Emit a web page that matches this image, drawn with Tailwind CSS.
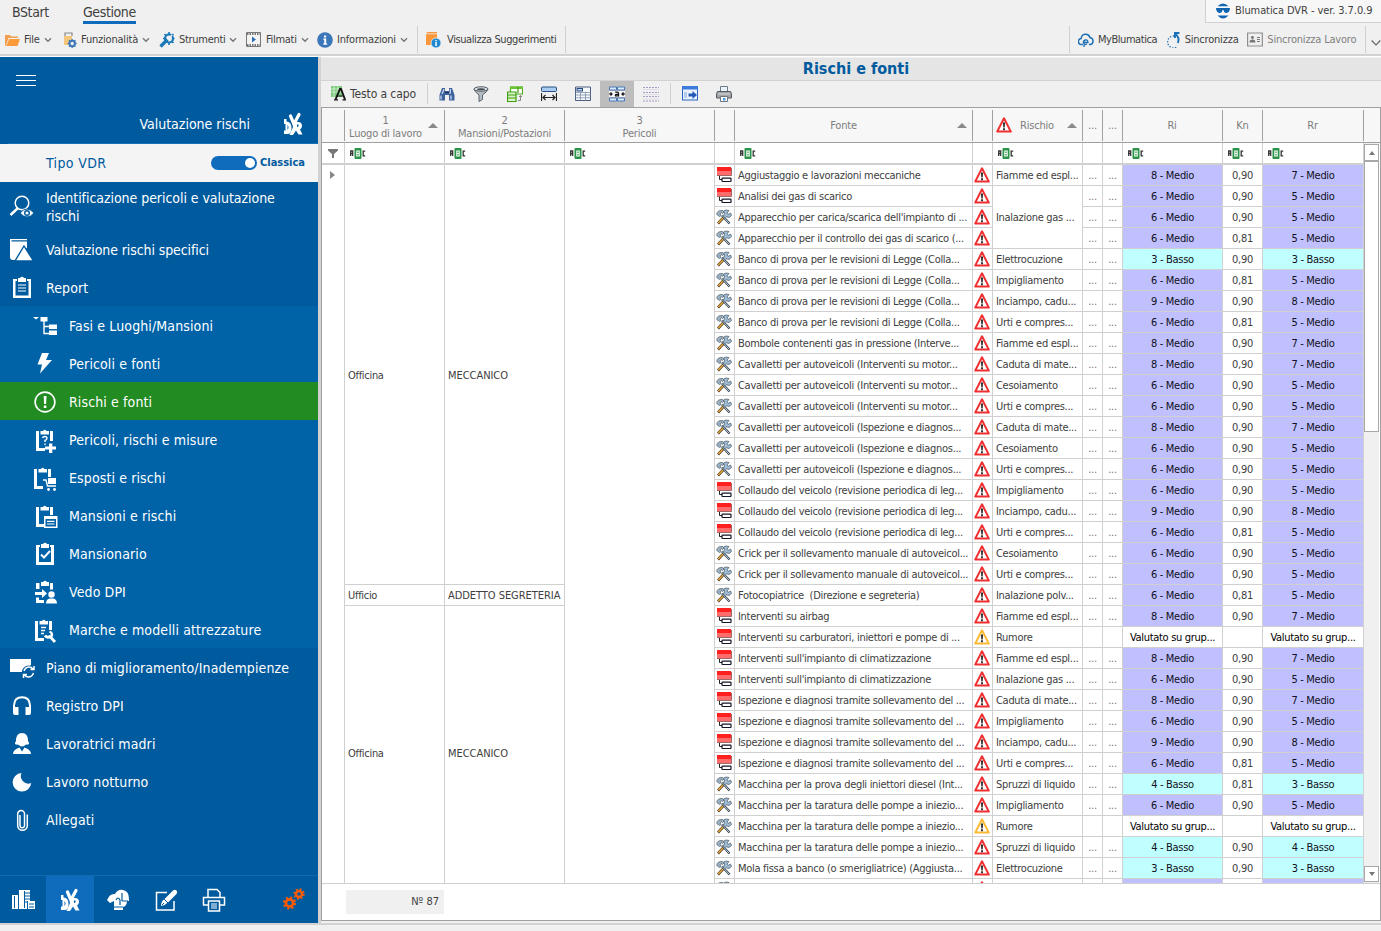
<!DOCTYPE html>
<html lang="it">
<head>
    <meta charset="UTF-8">
    <meta name="viewport" content="width=device-width, initial-scale=1.0">
    <title>Blumatica DVR</title>
    <script src="https://cdn.jsdelivr.net/npm/@tailwindcss/browser@4"></script>
</head>
<body class="w-[1381px] h-[931px] overflow-hidden bg-[#f0f0f0] font-['DejaVu_Sans_Condensed','DejaVu_Sans',sans-serif] text-[11px] text-[#404040]">

    <!-- Simboli riutilizzati nella griglia -->
    <svg class="hidden">
        <symbol id="i-risk" viewBox="0 0 16 16">
            <path d="M8 1.300 14.800 14.600H1.200z" fill="#fff" stroke="currentColor" stroke-width="2" stroke-linejoin="round"/>
            <path d="M7 5.500h2l-.3 5H7.300zM7.100 11.200h1.800v2H7.100z" fill="#222"/>
        </symbol>
        <symbol id="i-phase" viewBox="0 0 16 16">
            <rect x="1" y="0" width="14" height="4.500" fill="#ff2020"/>
            <rect x="1" y="4" width="14" height="4" fill="#ff6c6c"/>
            <path d="M15.500 1v7.500H1" fill="none" stroke="#8a4040" stroke-width=".8"/>
            <path d="M3.500 9v3.500H6" fill="none" stroke="#222"/>
            <rect x="6" y="11.200" width="9" height="3.300" rx=".5" fill="#fff" stroke="#15152a" stroke-width="1.200"/>
        </symbol>
        <symbol id="i-tools" viewBox="0 0 16 16">
            <path d="m2 14.500 6-6.500" stroke="#4a3a20" stroke-width="2.600"/>
            <path d="M2.300 14 7.500 8.500" stroke="#e8a83c" stroke-width="1.500"/>
            <path d="m6 6.500 7.500 8" stroke="#3a4650" stroke-width="2.300"/>
            <path d="M6 6.500 13 14" stroke="#b4c6d4" stroke-width="1"/>
            <path d="M.8 5.500C.8 2.500 3 1.300 6.500 1.500L8 3 6.500 4.500 5 3.500 4 5l1 1.500-1.500 1z" fill="#9db4c7" stroke="#56646f" stroke-width=".8"/>
            <path d="m7.500 7.500 1-3.500L7.500 2 10 1l3 .5L11 4l1 1.500 2.500-1.500 1 2.500L13 8.500l-3-.8-1 1z" fill="#9fbcd6" stroke="#56646f" stroke-width=".8"/>
        </symbol>
        <symbol id="i-chev" viewBox="0 0 8 6">
            <path d="m1 1.300 3 3 3-3" fill="none" stroke="#777" stroke-width="1.400"/>
        </symbol>
        <symbol id="i-clip" viewBox="0 0 24 24">
            <path d="M3 3h3v17h6v3H3z" fill="#fff"/>
            <path d="M7.500 3H10q1.500-2.500 3.500 0H16v3.500H7.500z" fill="#fff"/>
        </symbol>
        <symbol id="i-dvr" viewBox="0 0 20 24">
            <path d="M10.500 11 7.500 4M11.500 11l4.500-8.500" stroke="#fff" stroke-width="3.200" stroke-linecap="round"/>
            <path d="M1 7h2.500v2.500q5 0 5 6.500T4 22H1v-3.500h1.500V12H1z" fill="#fff"/>
            <path d="M9 10h6q4 0 4 4 0 2.500-2 3.500l2.500 5h-4l-2.500-4L10 23H6.500l3.500-8z" fill="#fff"/>
            <path d="M4.500 13v5q2-2.500 0-5zM14 12.500v2.500q2 0 1.500-2.500z" fill="#005a9e"/>
        </symbol>
        <symbol id="i-print" viewBox="0 0 24 24">
            <path d="M6 10V1.500h9l3 3V10M6 17H1.500V9.500h21V17H18M6.500 13h11v10h-11z" fill="none" stroke="#fff" stroke-width="1.500"/>
            <path d="M9 16h6M9 18h6M9 20h6" stroke="#fff" stroke-width="1"/>
        </symbol>
    </svg>

    <!-- Barra superiore -->
    <header class="h-[57px] flex justify-between border-b border-white shadow-[inset_0_-2px_0_#d2d2d2]">
        <div class="flex flex-col">
            <nav class="flex gap-[33px] pl-3 pt-[2px] h-[26px] text-[14px] leading-[20px] tracking-[-0.4px]">
                <span class="w-[38px]">BStart</span>
                <span class="h-[22px] border-b-[3px] border-[#0f6cbd]">Gestione</span>
            </nav>
            <div class="flex items-center h-[27px] pl-[5px] tracking-[-0.2px] [&_span]:pt-px">
                <div class="flex items-center w-[58px]">
                    <svg class="w-[15px] h-3 mr-1" viewBox="0 0 15 12"><path d="M0 12V1h5l1.500 1.500H13V4H3.500L1 12z" fill="#f0a050"/><path d="M4 5h11l-2.500 7H1.500z" fill="#fb9a3a"/></svg>
                    <span>File</span><svg class="w-2 h-1.5 ml-1"><use href="#i-chev"/></svg>
                </div>
                <div class="flex items-center w-[96px]">
                    <svg class="w-[14px] h-4 mr-1" viewBox="0 0 14 16"><path d="M2 4V1h7v3" fill="none" stroke="#888" stroke-width="1.200"/><path d="M1 4h8v4H6v5H1z" fill="#f3c67c"/><circle cx="9.200" cy="11.500" r="2.700" fill="none" stroke="#3f79b8" stroke-width="2"/><path d="M9.200 7v2M9.200 14v2M4.700 11.500h2M11.700 11.500h2M6 8.300l1.400 1.400M11 13.300l1.400 1.400M12.400 8.300 11 9.700M7.400 13.300 6 14.700" stroke="#3f79b8" stroke-width="1.300"/></svg>
                    <span>Funzionalità</span><svg class="w-2 h-1.5 ml-1"><use href="#i-chev"/></svg>
                </div>
                <div class="flex items-center w-[87px]">
                    <svg class="w-4 h-4 mr-1" viewBox="0 0 16 16"><path d="m1.500 14.500 7-7" stroke="#1a78b8" stroke-width="3.200"/><circle cx="10" cy="6.500" r="4" fill="none" stroke="#1a78b8" stroke-width="2.200"/><path d="M10 0v2M10 11v2M15.500 6.500h-2M4 6.500h2M5.500 2.200 7 3.500M14.500 2.200 13 3.500M14.500 11 13 9.500" stroke="#1a78b8" stroke-width="1.600"/><path d="m9 8 4-5" stroke="#f0f0f0" stroke-width="1.500"/></svg>
                    <span class="tracking-[-0.3px]">Strumenti</span><svg class="w-2 h-1.5 ml-1"><use href="#i-chev"/></svg>
                </div>
                <div class="flex items-center w-[71px]">
                    <svg class="w-[15px] h-[15px] mr-[5px]" viewBox="0 0 15 15"><path d="M.5.500h14v14H.500z" fill="#f4f4f4" stroke="#777"/><path d="M1 2h13M1 13h13" stroke="#777" stroke-width="2" stroke-dasharray="1.500 1"/><path d="m6 4.500 4 3-4 3z" fill="#2a6fb8"/></svg>
                    <span class="tracking-[-0.3px]">Filmati</span><svg class="w-2 h-1.5 ml-1"><use href="#i-chev"/></svg>
                </div>
                <div class="flex items-center w-[100px]">
                    <svg class="w-4 h-4 mr-1" viewBox="0 0 16 16"><circle cx="8" cy="8" r="7.800" fill="#3b76b8"/><path d="M7 3.500h2.200v2H7zM6.300 6.500h2.900v5h1v1.200H6.200v-1.200h1V7.700h-.9z" fill="#fff"/></svg>
                    <span>Informazioni</span><svg class="w-2 h-1.5 ml-1"><use href="#i-chev"/></svg>
                </div>
                <div class="flex items-center w-[149px] h-[27px] border-x border-[#d0d0d0] pl-2 tracking-[-0.4px]">
                    <svg class="w-[15px] h-4 mr-[6px]" viewBox="0 0 15 16"><path d="M0 1.500 1.500 0H11v13H0z" fill="#fb963a"/><path d="M0 1.800h11" stroke="#f0f0f0" stroke-width=".8"/><circle cx="10" cy="11" r="5" fill="#1f88cf" stroke="#f0f0f0" stroke-width=".8"/><path d="M9.300 8h1.500v1.200H9.300zM9.300 10h1.500v4H9.300z" fill="#fff"/></svg>
                    <span>Visualizza Suggerimenti</span>
                </div>
            </div>
        </div>
        <div class="flex flex-col items-end">
            <div class="flex items-center w-[176px] h-[23px] border-l border-b border-[#cfcfcf] bg-[#f7f7f7] pl-2.5 whitespace-nowrap tracking-[-0.08px]">
                <svg class="w-[14px] h-4 mr-[5px]" viewBox="0 0 14 16"><path d="M1.500 3.300Q7-2.500 12.500 3.300zM1.500 12.500q5.500 6 11 0z" fill="#0f65b0"/><path d="M0 5h14q-.2 4.500-3.500 5-2.500.2-3-3h-1q-.5 3.200-3 3Q.2 9.500 0 5z" fill="#0f65b0"/></svg>
                <span class="pt-px">Blumatica DVR - ver. 3.7.0.9</span>
            </div>
            <div class="flex items-center w-[312px] h-[27px] mt-[3px] border-l border-[#d0d0d0] pl-2 whitespace-nowrap tracking-[-0.2px]">
                <svg class="w-4 h-4 mr-[4px]" viewBox="0 0 16 16"><path d="M5 12.500H3.500a3 3 0 0 1-.3-6A4.500 4.500 0 0 1 12 5.500a3.600 3.600 0 0 1 .5 7H11" fill="none" stroke="#1a6fb5" stroke-width="1.500"/><path d="M6 10.500h4q0-3-2.500-2.500t-2 3 3.500 1M6 13v2" fill="none" stroke="#1a6fb5" stroke-width="1.300"/></svg>
                <span class="w-[68px] pt-px tracking-[-0.45px]">MyBlumatica</span>
                <svg class="w-4 h-4 mr-[3px]" viewBox="0 0 16 16"><path d="M8 4a6 6 0 1 0 3 11" fill="none" stroke="#1a6fb5" stroke-width="1.300" stroke-dasharray="1.300 1.600"/><path d="M13.500 1H9v5M9.500 2q4.500 3.500 2.500 9" fill="none" stroke="#1a6fb5" stroke-width="1.900"/></svg>
                <span class="w-[63px] pt-px">Sincronizza</span>
                <svg class="w-4 h-[15px] mr-[4px]" viewBox="0 0 16 15"><path d="M.6 1h14.800v13H.600z" fill="none" stroke="#8f8f8f" stroke-width="1.200"/><circle cx="5.500" cy="5.500" r="1.500" fill="#777"/><path d="M2.500 10.500q0-3 3-3t3 3zM10 5h3v1h-3zM10 7h3v1h-3zM10 9h3v1h-3z" fill="#777"/></svg>
                <span class="w-[98px] pt-px text-[#808080]">Sincronizza Lavoro</span>
                <span class="border-l border-[#d0d0d0] h-[27px] pl-[5px] pt-[13px]"><svg class="w-2.5 h-2" viewBox="0 0 8 6"><path d="m.5 1 3.500 3.500L7.500 1" fill="none" stroke="#666" stroke-width="1"/></svg></span>
            </div>
        </div>
    </header>

    <div class="flex h-[866px]">
        <!-- Menu laterale -->
        <aside class="w-[318px] shrink-0 flex flex-col bg-[#005a9e] text-white text-[14px]">
            <div class="h-[87px] flex flex-col">
                <svg class="w-5 h-3 ml-4 mt-[18px]" viewBox="0 0 20 12"><path d="M0 .5h20M0 5.500h20M0 10.500h20" stroke="#fff"/></svg>
                <div class="flex items-center justify-end h-6 mt-[25px] pr-[15px]">
                    <span>Valutazione rischi</span>
                    <svg class="w-5 h-6 ml-[33px]"><use href="#i-dvr"/></svg>
                </div>
                <div class="ml-2 mt-[7px] h-px bg-[#1a70b8]"></div>
            </div>
            <div class="h-[38px] bg-[#f4f4f4] text-[#005a9e] flex items-center pl-[46px]">
                <span class="w-[165px] pt-px tracking-[0.35px]">Tipo VDR</span>
                <span class="w-[46px] h-[14px] rounded-full bg-[#0f6cbd] flex items-center justify-end pr-[2px]"><span class="w-2.5 h-2.5 rounded-full bg-white"></span></span>
                <span class="ml-[3px] text-[11px] font-bold">Classica</span>
            </div>
            <ul id="menu"></ul>
            <div class="mt-auto h-[48px] flex items-center border-t border-[#1468b4]">
                <span class="w-[46px] flex justify-center"><svg class="w-6 h-6" viewBox="0 0 24 24"><path d="M1 7h7v14H1zM8 2h11v19H8zM17 13h7v8h-7z" fill="#fff"/><path d="M14 5h5M14 8h5M14 11h5M14 14h3M3.500 8v12M7.500 7v14M16.500 13v8M18 16h5M18 19h5M13.500 3v17" stroke="#005a9e" stroke-width="1"/></svg></span>
                <span class="w-[48px] h-full bg-[#0f6cbd] flex items-center justify-center"><svg class="w-5 h-6"><use href="#i-dvr"/></svg></span>
                <span class="w-[48px] flex justify-center"><svg class="w-6 h-6" viewBox="0 0 24 24"><path d="M1 12q3-7 8-6 3-5 8-4 6 1 6 9v2h-2q0 5-4 6v3H8v-9l-4 2z" fill="#fff"/><path d="M10 12q2-4 4 0v5M16 5v8M8 19h9M16 13h6" fill="none" stroke="#005a9e" stroke-width="1.200"/></svg></span>
                <span class="w-[48px] flex justify-center"><svg class="w-6 h-6" viewBox="0 0 24 24"><path d="M13 4.500H2.500V22H20v-9" fill="none" stroke="#fff" stroke-width="1.500"/><path d="M7 18q0-5 3.500-7L19 2.500q2-1.500 3.500 0t0 3.500L14 14.500q-3 3-7 3.500z" fill="#fff"/><path d="m10 11 4 4M10 15l-2 2" stroke="#005a9e"/></svg></span>
                <span class="w-[48px] flex justify-center"><svg class="w-6 h-6"><use href="#i-print"/></svg></span>
                <svg class="w-[22px] h-[22px] ml-[45px] mb-0.5" viewBox="0 0 22 22"><g fill="none" stroke="#ff5a00"><circle cx="6.500" cy="15" r="3.600" stroke-width="2.600"/><circle cx="6.500" cy="15" r="5.700" stroke-width="1.800" stroke-dasharray="2.200 2.276"/><circle cx="16" cy="6" r="3" stroke-width="2.400"/><circle cx="16" cy="6" r="4.900" stroke-width="1.600" stroke-dasharray="1.900 1.948"/></g></svg>
            </div>
        </aside>

        <!-- Griglia rischi e fonti -->
        <main class="flex-1 border-l-[3px] border-[#d2d2d2] flex flex-col">
            <h1 class="h-[22px] mt-px bg-[#e5e5e5] text-center text-[16px] leading-[22px] font-bold text-[#005a9e] pl-[10px]">Rischi e fonti</h1>
            <div class="h-[27px] border-t border-[#d2d2d2] flex items-center pl-[10px] pb-px">
                <svg class="w-[15px] h-[15px] mr-1" viewBox="0 0 15 15"><rect width="11" height="11" fill="#7ccb7c"/><path d="M0 3h11M0 6h11M3 0v11M7 0v11" stroke="#c8ecc8"/><path d="m4.500 13.500 4.500-10.500h1l4 10.500" stroke="#111" stroke-width="1.900" fill="none"/><path d="M6 10h6M3 13.800h4M11.500 13.800h3.500" stroke="#111" stroke-width="1.200" fill="none"/></svg>
                <span class="text-[12px] w-[77px] tracking-[-0.1px]">Testo a capo</span>
                <span class="h-[21px] border-l border-[#cfcfcf]"></span>
                <div class="flex items-center h-[26px]">
                    <span class="w-[34px] ml-[2px] flex justify-center"><svg class="w-4 h-4" viewBox="0 0 16 16"><path d="M3 2h3v3h4V2h3l2.500 7v5.500H10V9H6v5.500H.500V9z" fill="#3d619c"/><path d="M2 9.500v4M12 9.500v4M5 3 3 8M11.500 3 11 8" stroke="#c5d8ee" stroke-width="1.300"/><path d="M6 6.500h4" stroke="#1b2c55"/></svg></span>
                    <span class="w-[34px] flex justify-center"><svg class="w-4 h-4" viewBox="0 0 16 16"><path d="M1 3q.5 2.500 5 6v6.500l3.500-2V9Q14.500 5.500 15 3z" fill="#b5bcc4" stroke="#5c646c"/><ellipse cx="8" cy="3" rx="7" ry="2.200" fill="#e6eaee" stroke="#4c545c"/><ellipse cx="8" cy="3.300" rx="4" ry="1" fill="#444b52"/></svg></span>
                    <span class="w-[34px] flex justify-center"><svg class="w-4 h-4" viewBox="0 0 16 16"><path d="M3.500 1h12v7h-12z" fill="#fff" stroke="#4fae1c" stroke-width="1.200"/><path d="M3 .5h13v2.500H3z" fill="#6cc435"/><path d="M.5 6h8.500v9.500H.500z" fill="#d9f4c6" stroke="#3f9e14" stroke-width="1.200"/><path d="M1 9h8M1 12h8M11 1v6" stroke="#3f9e14" stroke-width="1.200"/><path d="M11 14.500h2.500V9.500M12 11l1.500-1.500L15 11" fill="none" stroke="#888"/></svg></span>
                    <span class="w-[34px] flex justify-center"><svg class="w-4 h-4" viewBox="0 0 16 16"><rect x=".5" y="1" width="15" height="4.500" rx="1" fill="#a9cdf2" stroke="#2b4c80"/><path d="M.5 7v8M15.500 7v8M2 11.500h12M4.500 9 2 11.500 4.500 14M11.500 9l2.500 2.500-2.500 2.500" fill="none" stroke="#222" stroke-width="1.200"/></svg></span>
                    <span class="w-[34px] flex justify-center"><svg class="w-4 h-4" viewBox="0 0 16 16"><path d="M.5 1h15v13.500H.500z" fill="#f4f7fb" stroke="#4a5f80"/><path d="M.5 6.500h15M.5 9h15M.5 11.800h15M5.500 6.500v8M10.500 6.500v8" stroke="#8090aa" stroke-width=".8"/><rect x="2" y="2.500" width="5.500" height="2.500" fill="#bcd4f0" stroke="#2b4c80"/></svg></span>
                    <span class="w-[34px] h-[26px] bg-[#bdbdbd] flex items-center justify-center"><svg class="w-4 h-4" viewBox="0 0 16 16"><path d="M.5 1h7v3h-7zM8.500 1h7v3h-7zM.5 12h7v3h-7zM8.500 12h7v3h-7z" fill="#dcebfa" stroke="#4d78b5"/><path d="M0 5h16v6H0z" fill="#f4f4f4"/><path d="M0 8h3M13 8h3M1.500 6.500 3 8 1.500 9.500M14.500 6.500 13 8l1.500 1.500M6.200 6.200h2.300q1 0 1 1V10.500M9.500 8.300H7.500q-1.500.2-1 1.500h3" stroke="#111" fill="none" stroke-width="1.200"/></svg></span>
                    <span class="w-[34px] flex justify-center"><svg class="w-4 h-4" viewBox="0 0 16 16"><path d="M0 1.500h16M0 6.500h16M0 10.500h16M0 15h16" stroke="#a99cc4" stroke-width="1" stroke-dasharray="2 1"/><path d="M0 3.500h16M0 8.500h16M0 13h16" stroke="#e2dcec"/></svg></span>
                    <span class="h-[21px] border-l border-[#cfcfcf] ml-[2px]"></span>
                    <span class="w-[34px] ml-[2px] flex justify-center"><svg class="w-4 h-[15px]" viewBox="0 0 16 15"><rect x=".5" y=".5" width="15" height="13.500" fill="#eaf3fd" stroke="#2a63c0"/><path d="M0 0h16v3.500H0z" fill="#3d7ade"/><path d="M2 7h3M2 9h3M2 11h3" stroke="#7aa5e0"/><path d="M6.500 7.500h4V5l4.500 4-4.500 4v-2.500h-4z" fill="#2259b8"/></svg></span>
                    <span class="w-[34px] flex justify-center"><svg class="w-4 h-4" viewBox="0 0 16 16"><path d="M4.500.500h7v5h-7z" fill="#e9f3fb" stroke="#707a84"/><path d="M1.500 5.500h13l1 2V12H.500V7.500z" fill="#a0a4a8" stroke="#555b60"/><path d="M2 8h12" stroke="#dcdcdc"/><path d="M4.500 10.500h7v5h-7z" fill="#fff" stroke="#6b7680"/><path d="M7 12h2.500v2.500H7z" fill="#3f9ae0"/></svg></span>
                </div>
            </div>

            <div class="h-[814px] border border-[#a0a0a0] bg-white flex flex-col">
                <!-- Intestazione colonne -->
                <div class="h-[35px] shrink-0 bg-[#f7f7f7] border-b border-[#a0a0a0] flex items-center text-[#7d7d7d] text-center leading-[13px] tracking-[-0.2px] [&>div]:h-[31px] [&>div]:border-r [&>div]:border-[#a0a0a0] [&>div]:flex [&>div]:items-center [&>div]:justify-center [&>div]:shrink-0">
                    <div class="w-[23px]"></div>
                    <div class="w-[100px] gap-[6px] pr-0.5"><span class="pt-[3px]">1<br>Luogo di lavoro</span><svg class="w-2.5 h-[5px]" viewBox="0 0 10 5"><path d="M0 5 5 0l5 5z" fill="#8a8a8a"/></svg></div>
                    <div class="w-[120px]"><span class="pt-[3px]">2<br>Mansioni/Postazioni</span></div>
                    <div class="w-[150px]"><span class="pt-[3px]">3<br>Pericoli</span></div>
                    <div class="w-[20px]"></div>
                    <div class="w-[238px]"><span class="flex-1 pr-[1px]">Fonte</span><svg class="w-2.5 h-[5px] mr-[5px] ml-[4px]" viewBox="0 0 10 5"><path d="M0 5 5 0l5 5z" fill="#8a8a8a"/></svg></div>
                    <div class="w-[20px]"></div>
                    <div class="w-[90px] pr-[2px]"><svg class="w-4 h-4 text-[#f03030]"><use href="#i-risk"/></svg><span class="w-[50px]">Rischio</span><svg class="w-2.5 h-[5px] ml-[5px]" viewBox="0 0 10 5"><path d="M0 5 5 0l5 5z" fill="#8a8a8a"/></svg></div>
                    <div class="w-[20px]">...</div>
                    <div class="w-[20px]">...</div>
                    <div class="w-[100px] pr-px">Ri</div>
                    <div class="w-[40px]">Kn</div>
                    <div class="w-[101px] pr-px">Rr</div>
                </div>
                <div class="h-[741px] shrink-0 flex border-b border-[#d0d0d0]">
                    <div class="w-[1042px] h-full overflow-hidden">
                        <!-- Riga filtri -->
                        <div id="filtri" class="h-[22px] flex border-b-2 border-[#d0d0d0]"></div>
                        <table class="w-[1042px] table-fixed border-separate border-spacing-0 whitespace-nowrap tracking-[-0.3px]">
                            <colgroup>
                                <col class="w-[23px]"><col class="w-[100px]"><col class="w-[120px]"><col class="w-[150px]"><col class="w-[20px]"><col class="w-[238px]"><col class="w-[20px]"><col class="w-[90px]"><col class="w-[20px]"><col class="w-[20px]"><col class="w-[100px]"><col class="w-[40px]"><col class="w-[101px]">
                            </colgroup>
                            <tbody id="righe"></tbody>
                        </table>
                    </div>
                    <!-- Barra di scorrimento -->
                    <div class="w-[15px] bg-[#f0f0f0] flex flex-col">
                        <div class="h-[17px] mt-px border border-[#a8a8a8] bg-white flex items-center justify-center"><svg class="w-1.5 h-1" viewBox="0 0 6 4"><path d="M0 4 3 0l3 4z" fill="#777"/></svg></div>
                        <div class="h-[271px] border border-[#a8a8a8] bg-white"></div>
                        <div class="h-[16px] mt-auto mb-[1px] border border-[#a8a8a8] bg-white flex items-center justify-center"><svg class="w-1.5 h-1" viewBox="0 0 6 4"><path d="m0 0 3 4 3-4z" fill="#777"/></svg></div>
                    </div>
                </div>
                <div class="ml-6 mt-[6px] w-[98px] h-6 bg-[#f0f0f0] flex items-center justify-end pr-[5px] pt-px">Nº 87</div>
            </div>
        </main>
    </div>
    <div class="h-[3px] border-t-2 border-[#d2d2d2] bg-[#f0f0f0]"></div>

    <script>
        // Voci del menu: [livello, testo, icona]
        const clip = '<use href="#i-clip"/>';
        const voci = [
            [0, 'Identificazione pericoli e valutazione rischi', '<circle cx="12" cy="8" r="6.800" fill="none" stroke="#fff" stroke-width="1.500"/><path d="m8 13-7.500 7" stroke="#fff" stroke-width="2.400"/><path d="M10 18q7-8 14 0-7 8-14 0z" fill="#fff" stroke="#005a9e" stroke-width="1"/><circle cx="17" cy="18" r="3" fill="#005a9e"/><circle cx="17" cy="18" r="1.600" fill="#fff"/>'],
            [0, 'Valutazione rischi specifici', '<path d="M0 1h17v1.200H1.500V3.500H17v6L7 22H3q-3 0-3-3z" fill="#fff"/><path d="m14 8 9.500 15H5z" fill="#fff" stroke="#005a9e" stroke-width="1.400"/>'],
            [0, 'Report', '<path d="M3 3h4v3h10V3h4v19H3z" fill="#fff"/><path d="M5.500 5h13v14.500h-13z" fill="#005a9e"/><path d="M8 2h2q2-2.500 4 0h2v4H8z" fill="#fff"/><path d="M8 9h8M8 12h8M8 15h8" stroke="#fff" stroke-width="1.200"/>'],
            [1, 'Fasi e Luoghi/Mansioni', '<path d="M0 3h6L3 5.500zM7.500 3h7v4.500h-7zM16 10.500h8V15h-8zM16 16.500h8V21h-8z" fill="#fff"/><path d="M11 7v12.500h5M11 12.500h5" fill="none" stroke="#fff" stroke-width="1.400"/>'],
            [1, 'Pericoli e fonti', '<path d="M9 1h7l-3 7h6L7 21.500l2-9H4.500z" fill="#fff"/>'],
            [1, 'Rischi e fonti', '<circle cx="12" cy="12" r="9.900" fill="none" stroke="#fff" stroke-width="1.600"/><path d="M10.700 6h2.800l-.4 8h-2zM10.800 15.500h2.600V18h-2.600z" fill="#fff"/>', 1],
            [1, 'Pericoli, rischi e misure', clip + '<path d="M17 3h3v10h-3zM16 15.500h3.300v3H23v3h-3.700v3.500H16v-3.500h-4v-3h4z" fill="#fff"/><path d="M9.500 10q.5-1.500 2.500-1.500t2 2q0 1-2 2v1.500M12 15.500v1.500" fill="none" stroke="#fff" stroke-width="1.400"/>'],
            [1, 'Esposti e rischi', '<g transform="translate(-2)">' + clip + '<path d="M17 3h3v8h-3z" fill="#fff"/><path d="M17 12h8v6h-8z" fill="#fff"/><path d="M12 14h3l1.500 6H25" fill="none" stroke="#fff" stroke-width="1.400"/><circle cx="17.500" cy="23.500" r="1.400" fill="#fff"/><circle cx="23.500" cy="23.500" r="1.400" fill="#fff"/></g>'],
            [1, 'Mansioni e rischi', clip + '<path d="M17 3h3v8h-3zM11 12h13.500v12H11z" fill="#fff"/><path d="M12.500 15h10.500v7.500H12.500z" fill="#0063a8"/><path d="M14 17.300h7.500M14 20h7.500" stroke="#fff" stroke-width="1.200"/>'],
            [1, 'Mansionario', '<path d="M3 3h4v3h10V3h4v20H3z" fill="#fff"/><path d="M6 5h12v15H6z" fill="#0063a8"/><path d="M8 2h2q2-2.500 4 0h2v4H8z" fill="#fff"/><path d="m8 12.500 3 3 6-6.500" fill="none" stroke="#fff" stroke-width="2"/>'],
            [1, 'Vedo DPI', '<path d="M3 3h3.500v6H3zM3 17.500h3V20h5v3H3zM17 3h3v6.500h-3zM8 2h2q2-2.500 4 0h2v4H8zM2 12h7V9l5 4.500-5 4.500v-3H2z" fill="#fff"/><circle cx="18.500" cy="14.500" r="3.200" fill="#fff"/><path d="M13 23.500q0-4 3.500-5h4q3.500 1 3.500 5z" fill="#fff"/>'],
            [1, 'Marche e modelli attrezzature', '<g transform="translate(-1)">' + clip + '<path d="M17 3h3v9h-3z" fill="#fff"/><path d="M9 9.500h5M9 12.500h4M9 15.500h3" stroke="#fff" stroke-width="1.300"/><path d="M13 17.500q2 3 5 1l5 5.500" fill="none" stroke="#fff" stroke-width="2.800"/><path d="M19.500 18.500q1.500-3.500-2-5" fill="none" stroke="#fff" stroke-width="2.400"/></g>'],
            [0, 'Piano di miglioramento/Inadempienze', '<path d="M0 3h21v6l-9 7H0z" fill="#fff"/><circle cx="18.500" cy="16" r="6.500" fill="#005a9e"/><path d="M14 15q1.500-4 5-4 2.500 0 4 2M24 10v3.500h-3.500M23.500 17q-1.500 4-5 4-2.500 0-4-2M13.500 22v-3.500H17" fill="none" stroke="#fff" stroke-width="1.500"/>'],
            [0, 'Registro DPI', '<path d="M4 15v-3.500Q4.300 3.300 12 3.300t8 8.200V15" fill="none" stroke="#fff" stroke-width="2"/><path d="M3 13h5.500v8H5q-2 0-2-2zM15.500 13H21v6q0 2-2 2h-3.500z" fill="#fff"/>'],
            [0, 'Lavoratrici madri', '<path d="M12 1q6 0 6 8 1.500 2 1 3-1.500 1-3 .5-4 4-8 0-1.500.5-3-.5-.5-1 1-3 0-8 6-8zM3 22q0-4.500 6.500-6.500l2.500 4 2.500-4Q21 17.500 21 22z" fill="#fff"/>'],
            [0, 'Lavoro notturno', '<path d="M11.500 3a7.500 7.500 0 0 0 9.700 10A9.300 9.300 0 1 1 11.500 3z" fill="#fff"/>'],
            [0, 'Allegati', '<path d="M10 7v10.500a2 2 0 0 0 4.500 0V6a3.400 3.400 0 0 0-6.800 0v11.500a4.800 4.800 0 0 0 9.600 0V6.500" fill="none" stroke="#fff" stroke-width="1.500"/>']
        ];

        document.getElementById('menu').innerHTML = voci.map(([livello, testo, icona, attiva], i) => {
            const altezza = i === 0 ? 'h-[48px] pt-[2px] tracking-[-0.05px]' : i === 1 ? 'h-[38px] pt-px tracking-[-0.1px]' : 'h-[38px] pt-px tracking-[0.12px]';
            const sfondo = attiva ? 'bg-[#228b22]' : livello ? 'bg-[#0063a8]' : '';
            const rientro = livello ? 'pl-[33px]' : 'pl-[10px]';
            return `<li class="flex items-center gap-3 leading-[18px] ${altezza} ${sfondo} ${rientro}">
                <svg class="w-6 h-6 shrink-0 overflow-visible" viewBox="0 0 24 24">${icona}</svg>
                <span class="max-w-[250px]">${testo}</span>
            </li>`;
        }).join('');

        // Filtri: larghezza colonna e presenza dell'operatore
        const abc = '<svg class="w-4 h-[11px]" viewBox="0 0 16 11"><path d="M.7 8V3h2v5M.7 5.500h2M15.200 3.200h-2v4.600h2" fill="none" stroke="#333" stroke-width="1.300"/><rect x="4.500" width="7" height="11" rx="1" fill="#2b9348"/><path d="M6.800 3h2.400v5H6.800zM6.800 5.500h2.400" fill="none" stroke="#fff" stroke-width="1.100"/></svg>';
        const filtri = [
            ['w-[23px]', 0], ['w-[100px]', 1], ['w-[120px]', 1], ['w-[150px]', 1], ['w-[20px]', 0], ['w-[238px]', 1], ['w-[20px]', 0],
            ['w-[90px]', 1], ['w-[20px]', 0], ['w-[20px]', 0], ['w-[100px]', 1], ['w-[40px]', 1], ['w-[101px]', 1]
        ];
        document.getElementById('filtri').innerHTML = filtri.map(([w, f], i) =>
            `<div class="${w} shrink-0 flex items-center border-r border-[#d0d0d0] pl-[5px]">${f ? abc : i === 0 ? '<svg class="w-[10px] h-[9px] ml-[1px]" viewBox="0 0 10 9"><path d="M0 0h10v1.500L6 5v4H4V5L0 1.500z" fill="#777"/></svg>' : ''}</div>`
        ).join('');

        // Righe: [tipo (f = fase, a = attrezzatura), fonte, rischio, Ri, Kn, Rr]
        const righe = [
            ['f', 'Aggiustaggio e lavorazioni meccaniche', 'Fiamme ed espl...', 8, '0,90', 7],
            ['f', 'Analisi dei gas di scarico', 'Inalazione gas ...', 6, '0,90', 5, 3],
            ['a', "Apparecchio per carica/scarica dell'impianto di ...", '', 6, '0,90', 5, 0],
            ['a', 'Apparecchio per il controllo dei gas di scarico (...', '', 6, '0,81', 5, 0],
            ['a', 'Banco di prova per le revisioni di Legge (Colla...', 'Elettrocuzione', 3, '0,90', 3],
            ['a', 'Banco di prova per le revisioni di Legge (Colla...', 'Impigliamento', 6, '0,81', 5],
            ['a', 'Banco di prova per le revisioni di Legge (Colla...', 'Inciampo, cadu...', 9, '0,90', 8],
            ['a', 'Banco di prova per le revisioni di Legge (Colla...', 'Urti e compres...', 6, '0,81', 5],
            ['a', 'Bombole contenenti gas in pressione (Interve...', 'Fiamme ed espl...', 8, '0,90', 7],
            ['a', 'Cavalletti per autoveicoli (Interventi su motor...', 'Caduta di mate...', 8, '0,90', 7],
            ['a', 'Cavalletti per autoveicoli (Interventi su motor...', 'Cesoiamento', 6, '0,90', 5],
            ['a', 'Cavalletti per autoveicoli (Interventi su motor...', 'Urti e compres...', 6, '0,90', 5],
            ['a', 'Cavalletti per autoveicoli (Ispezione e diagnos...', 'Caduta di mate...', 8, '0,90', 7],
            ['a', 'Cavalletti per autoveicoli (Ispezione e diagnos...', 'Cesoiamento', 6, '0,90', 5],
            ['a', 'Cavalletti per autoveicoli (Ispezione e diagnos...', 'Urti e compres...', 6, '0,90', 5],
            ['f', 'Collaudo del veicolo (revisione periodica di leg...', 'Impigliamento', 6, '0,90', 5],
            ['f', 'Collaudo del veicolo (revisione periodica di leg...', 'Inciampo, cadu...', 9, '0,90', 8],
            ['f', 'Collaudo del veicolo (revisione periodica di leg...', 'Urti e compres...', 6, '0,81', 5],
            ['a', 'Crick per il sollevamento manuale di autoveicol...', 'Cesoiamento', 6, '0,90', 5],
            ['a', 'Crick per il sollevamento manuale di autoveicol...', 'Urti e compres...', 6, '0,90', 5],
            ['a', 'Fotocopiatrice&nbsp; (Direzione e segreteria)', 'Inalazione polv...', 6, '0,81', 5],
            ['f', 'Interventi su airbag', 'Fiamme ed espl...', 8, '0,90', 7],
            ['f', 'Interventi su carburatori, iniettori e pompe di ...', 'Rumore', 0, '', 0],
            ['f', "Interventi sull'impianto di climatizzazione", 'Fiamme ed espl...', 8, '0,90', 7],
            ['f', "Interventi sull'impianto di climatizzazione", 'Inalazione gas ...', 6, '0,90', 5],
            ['f', 'Ispezione e diagnosi tramite sollevamento del ...', 'Caduta di mate...', 8, '0,90', 7],
            ['f', 'Ispezione e diagnosi tramite sollevamento del ...', 'Impigliamento', 6, '0,90', 5],
            ['f', 'Ispezione e diagnosi tramite sollevamento del ...', 'Inciampo, cadu...', 9, '0,90', 8],
            ['f', 'Ispezione e diagnosi tramite sollevamento del ...', 'Urti e compres...', 6, '0,81', 5],
            ['a', 'Macchina per la prova degli iniettori diesel (Int...', 'Spruzzi di liquido', 4, '0,81', 3],
            ['a', 'Macchina per la taratura delle pompe a iniezio...', 'Impigliamento', 6, '0,90', 5],
            ['a', 'Macchina per la taratura delle pompe a iniezio...', 'Rumore', 0, '', 0],
            ['a', 'Macchina per la taratura delle pompe a iniezio...', 'Spruzzi di liquido', 4, '0,90', 4],
            ['a', 'Mola fissa a banco (o smerigliatrice) (Aggiusta...', 'Elettrocuzione', 3, '0,90', 3],
            ['a', '', '', 6, '', 5]
        ];

        // Luogo e mansione uniti su più righe: indice iniziale -> [righe, luogo, mansione]
        const gruppi = { 0: [20, 'Officina', 'MECCANICO'], 20: [1, 'Ufficio', 'ADDETTO SEGRETERIA'], 21: [14, 'Officina', 'MECCANICO'] };

        const td = 'p-0 pt-px border-r border-b border-[#d0d0d0] overflow-hidden leading-[19px]';
        const tdIcona = 'p-0 border-r border-b border-[#d0d0d0] overflow-hidden';

        // La riga 35 spunta solo in parte sotto le altre e resta senza testi
        function livello(n, visibile) {
            if (!n) return `<td class="${td} text-center text-black">Valutato su grup...</td>`;
            const bg = n < 5 ? 'bg-[#c0ffff]' : 'bg-[#c0c0ff]';
            return `<td class="${td} text-center text-[#101020] ${bg}">${visibile ? `${n} - ${n < 5 ? 'Basso' : 'Medio'}` : ''}</td>`;
        }

        document.getElementById('righe').innerHTML = righe.map(([tipo, fonte, rischio, ri, kn, rr, span], i) => {
            const g = gruppi[i];
            const visibile = i < 34;
            const punti = ri && visibile ? '...' : '';
            let html = '<tr class="h-[21px]">';
            if (i === 0) html += `<td rowspan="35" class="p-0 border-r border-[#d0d0d0] align-top"><svg class="w-[5px] h-2 ml-[8px] mt-[6px]" viewBox="0 0 5 8"><path d="m0 0 5 4-5 4z" fill="#888"/></svg></td>`;
            if (g) html += `<td rowspan="${g[0]}" class="${td} pl-[3px]">${g[1]}</td><td rowspan="${g[0]}" class="${td} pl-[3px]"><span class="tracking-[-0.05px]">${g[2]}</span></td>`;
            if (i === 0) html += `<td rowspan="35" class="p-0 border-r border-[#d0d0d0]"></td>`;
            html += `<td class="${tdIcona}"><svg class="w-4 h-4 ml-px"><use href="${tipo === 'f' ? '#i-phase' : '#i-tools'}"/></svg></td>`;
            html += `<td class="${td} pl-[3px]">${fonte}</td>`;
            html += `<td class="${tdIcona}"><svg class="w-4 h-4 ml-px ${ri ? 'text-[#f03030]' : 'text-[#fbb934]'}"><use href="#i-risk"/></svg></td>`;
            if (span !== 0) html += `<td rowspan="${span || 1}" class="${td} pl-[3px]">${rischio}</td>`;
            html += `<td class="${td} text-center text-[#777]">${punti}</td><td class="${td} text-center text-[#777]">${punti}</td>`;
            html += livello(ri, visibile) + `<td class="${td} text-center">${kn}</td>` + livello(rr, visibile);
            return html + '</tr>';
        }).join('');
    </script>
</body>
</html>
